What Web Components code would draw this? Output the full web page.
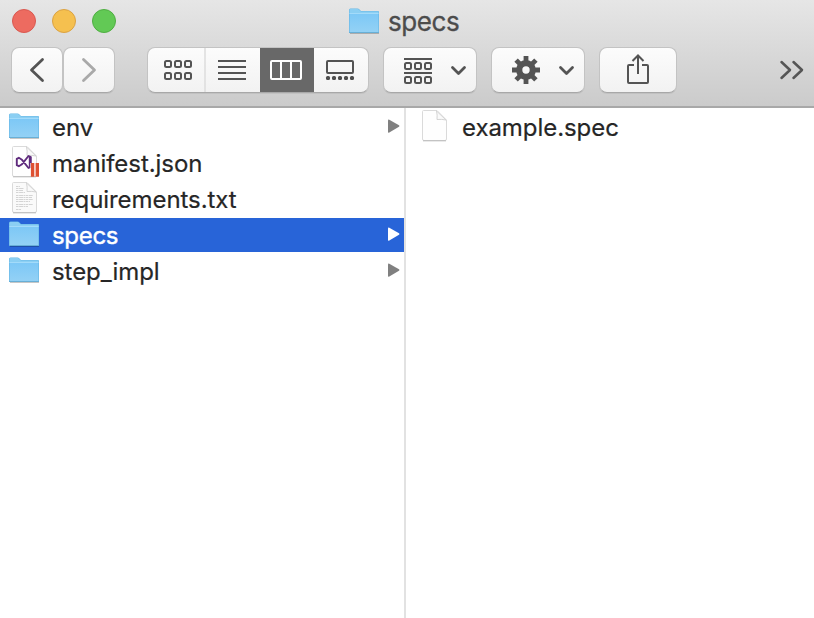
<!DOCTYPE html>
<html lang="en"><head><meta charset="utf-8"><title>specs</title>
<style>html,body{margin:0;height:100%;overflow:hidden;background:#fff}</style></head>
<body><finder-window></finder-window>
<script>
const define = (name, html, setup) => customElements.define(name, class extends HTMLElement {
  constructor() {
    super();
    this.attachShadow({mode: 'open'}).innerHTML = html;
  }
  connectedCallback() { if (setup) setup(this, this.shadowRoot); }
});

const page = (fill) => `<path d="M5.500 1.500H19L28.500 11V30Q28.500 31.500 27 31.500H6Q4.500 31.500 4.500 30V2.500Q4.500 1.500 5.500 1.500Z" fill="${fill}" stroke="#dadada"/><path d="M5 31.800H28" stroke="#b9b9b9"/><path d="M18.500 2Q19.500 6 19 10.500Q24 10 28 11Z" fill="#fafafa" stroke="#cfcfcf" stroke-width=".9"/>`;
const icons = {
  folder: `<defs><linearGradient id="f" x2="0" y2="1"><stop stop-color="#7dc8f6"/><stop offset="1" stop-color="#93d1f5"/></linearGradient></defs>
    <path d="M2 29.500H31" stroke="#000" stroke-opacity=".22"/>
    <path d="M1 6Q1 4.500 2.500 4.500H9.500Q10.500 4.500 11.500 5.500L13 7H30Q31 7 31 8V28Q31 29 30 29H2Q1 29 1 28Z" fill="#67b7e5"/>
    <path d="M1.500 6Q1.500 5 2.500 5H9.500Q10.500 5 11.300 6L12.800 7.500H30.500V10H1.500Z" fill="#8bcff3"/>
    <path d="M1.600 10H30.400V28H1.600Z" fill="url(#f)"/><path d="M1.500 9.500H30.500" stroke="#a3dbfa"/><path d="M1 28.500H31" stroke="#68afd6"/>`,
  page: page('#fefefe'),
  json: page('#fefefe') + `<g fill="none" stroke="#5f2b7d" stroke-width="1.900" stroke-linejoin="round"><path d="M8.800 13.800V20.200L10.800 21.200L14 19.200L20.500 11L22.800 12V22L20.500 23L14 14.800L10.800 12.800Z"/><path d="M21.700 12V22" stroke-width="1.800"/></g>
    <path d="M24.600 18V31M29.300 18V31" stroke="#fff" stroke-width="4.500"/><path d="M24.600 18V31.700M29.300 18V31.700" stroke="#de5133" stroke-width="3.400"/>`,
  text: page('#fafafa') + `<path d="M8 5.500H12M8 7.500H16M8 9.500H15M8 11.500H17M8 14.500H25M8 16.500H24M8 18.500H25M8 20.500H22M8 23.500H25M8 25.500H20M8 28.500H13" stroke="#cacaca" stroke-width=".8" stroke-dasharray="2.500 .6 4 .5 1.500 .5"/>`
};
define('file-icon', `<style>:host{display:block;width:32px;height:34px;flex:none}svg{display:block}</style><svg width="32" height="34" viewBox="0 1 32 34"></svg>`,
  (el, root) => root.querySelector('svg').innerHTML = icons[el.getAttribute('kind')]);

define('file-row', `<style>
  :host{display:flex;align-items:center;height:34px;padding:0 4px 0 8px;color:#262626;font:24px/34px Inter,"Liberation Sans",sans-serif;letter-spacing:-.06px;-webkit-text-stroke:.2px}
  :host([selected]){background:#2864d8;color:#fff;letter-spacing:-.3px;-webkit-text-stroke:.4px}
  .name{flex:1;margin-left:12px;padding-top:1px;white-space:nowrap;height:34px;box-sizing:border-box;line-height:34px}
  .arrow{display:none;fill:#808080}:host([expandable]) .arrow{display:block}:host([selected]) .arrow{fill:#fff}
  </style><slot name="icon"></slot><span class="name"><slot></slot></span>
  <svg class="arrow" width="13" height="16" viewBox="0 0 13 16"><path d="M1 1.500Q1 .2 2.300 .8L12 6.200Q13 7 12 7.700L2.300 13.600Q1 14.200 1 13Z"/></svg>`);

define('file-column', `<style>:host{display:flex;flex-direction:column;gap:2px;padding-top:2px;box-sizing:border-box;min-width:0}</style><slot></slot>`);

define('tool-button', `<style>
  :host{display:flex;box-sizing:border-box;height:46px;border:1px solid #c3c3c3;border-bottom-color:#a8a8a8;border-radius:8px;background:linear-gradient(#fcfcfc,#f2f2f2);overflow:hidden;box-shadow:0 1px 0 rgba(0,0,0,.06)}
  ::slotted(svg){display:block;flex:none;margin:-1px;fill:none;stroke:#545454;stroke-width:2}
  </style><slot></slot>`);

const boxes = (xs, ys, w, h) => ys.map(y => xs.map(x => `<rect x="${x}" y="${y}" width="${w}" height="${h}" rx="1.500"/>`).join('')).join('');
const teeth = Array.from({length: 8}, (_, i) => `<path d="M523.600 56H528.400V64H523.600Z" transform="rotate(${i * 45} 526 70)"/>`).join('');

define('finder-toolbar', `<style>
  :host{display:flex;height:46px;padding:0 9px 0 11px}
  .b1{width:52px}.b2{width:52px}.views{width:222px;margin-left:32px}.arr{width:94px;margin-left:14px}.gear{width:94px;margin-left:14px}.share{width:78px;margin-left:14px}
  .more{margin-left:auto;width:26px;height:46px;fill:none;stroke:#555;stroke-width:2.500;stroke-linecap:round;stroke-linejoin:round}
  </style>
  <tool-button class="b1"><svg width="52" height="46" viewBox="11 47 52 46" style="stroke-width:2.800"><path d="M42.500 59.500L31.500 70L42.500 80.500" stroke-linecap="round" stroke-linejoin="round"/></svg></tool-button>
  <tool-button class="b2"><svg width="52" height="46" viewBox="63 47 52 46" style="stroke:#a9a9a9;stroke-width:2.800"><path d="M83.500 59.500L94.500 70L83.500 80.500" stroke-linecap="round" stroke-linejoin="round"/></svg></tool-button>
  <tool-button class="views"><svg width="222" height="46" viewBox="147 47 222 46">
    ${boxes([165,175,185],[61,73],6,6)}
    <path d="M205 48V92" stroke="#dcdcdc" stroke-width="1.500"/>
    <path d="M218 61H246M218 67H246M218 73H246M218 79H246"/>
    <path d="M260 47H314V93H260Z" fill="#686868" stroke="none"/>
    <g stroke="#fff"><rect x="271" y="61" width="30" height="18" rx="1"/><path d="M281 61V79M291 61V79"/></g>
    <rect x="327" y="61" width="26" height="12" rx="1"/>
    <g fill="#4e4e4e" stroke="none">${boxes([326,332,338,344,350],[76],4,4)}</g>
  </svg></tool-button>
  <tool-button class="arr"><svg width="94" height="46" viewBox="383 47 94 46"><path d="M404 59H432M404 73H432"/>${boxes([405,415,425],[63,77],6,6)}<path d="M452.500 67.500L458.500 73.500L464.500 67.500" stroke-width="2.800" stroke-linecap="round" stroke-linejoin="round"/></svg></tool-button>
  <tool-button class="gear"><svg width="94" height="46" viewBox="491 47 94 46"><g fill="#545454" stroke="none">${teeth}</g><circle cx="526" cy="70" r="6.800" stroke-width="6.200"/><path d="M560.500 67.500L566.500 73.500L572.500 67.500" stroke-width="2.800" stroke-linecap="round" stroke-linejoin="round"/></svg></tool-button>
  <tool-button class="share"><svg width="78" height="46" viewBox="599 47 78 46"><path d="M634 65H629Q628 65 628 66V82Q628 83 629 83H647Q648 83 648 82V66Q648 65 647 65H642M638 74V56M632.500 61L638 55.500L643.500 61"/></svg></tool-button>
  <svg class="more" viewBox="779.500 47 26 46"><path d="M782 62L790.500 70L782 78M794 62L802.500 70L794 78"/></svg>`);

define('title-bar', `<style>
  :host{display:grid;grid-template-columns:336px 1fr;height:40px;align-items:center}
  .lights{display:flex;gap:16px;padding:0 0 1px 12px}.lights i{box-sizing:border-box;width:24px;height:24px;border:1px solid #d95850;border-radius:50%;background:#ed6b60}
  .lights i:nth-child(2){background:#f5c04f;border-color:#dba243}.lights i:nth-child(3){background:#62c955;border-color:#4fae42}
  .title{display:flex;align-items:center;gap:8px;padding-left:12px;color:#4c4c4c;font:26px/40px Inter,"Liberation Sans",sans-serif;letter-spacing:-.4px;-webkit-text-stroke:.3px}
  .title file-icon{padding-top:1px}.title span{padding-top:2px}
  </style><div class="lights"><i></i><i></i><i></i></div><div class="title"><file-icon kind="folder"></file-icon><span>specs</span></div>`);

define('finder-window', `<style>
  :host{display:flex;flex-direction:column;width:814px;height:618px;background:#fff}
  header{box-sizing:border-box;height:108px;background:linear-gradient(#e6e6e6,#cbcbcb);border-bottom:2px solid #a8a8a8;display:flex;flex-direction:column;gap:7px}
  main{flex:1;display:grid;grid-template-columns:406px 1fr}
  .first{border-right:2px solid #e2e2e2}
  .second{padding-left:4px}
  </style>
  <header><title-bar></title-bar><finder-toolbar></finder-toolbar></header>
  <main><file-column class="first">
    <file-row expandable><file-icon slot="icon" kind="folder"></file-icon>env</file-row>
    <file-row><file-icon slot="icon" kind="json"></file-icon>manifest.json</file-row>
    <file-row><file-icon slot="icon" kind="text"></file-icon>requirements.txt</file-row>
    <file-row expandable selected><file-icon slot="icon" kind="folder"></file-icon>specs</file-row>
    <file-row expandable><file-icon slot="icon" kind="folder"></file-icon>step_impl</file-row>
  </file-column><file-column class="second">
    <file-row><file-icon slot="icon" kind="page"></file-icon>example.spec</file-row>
  </file-column></main>`);
</script></body></html>
